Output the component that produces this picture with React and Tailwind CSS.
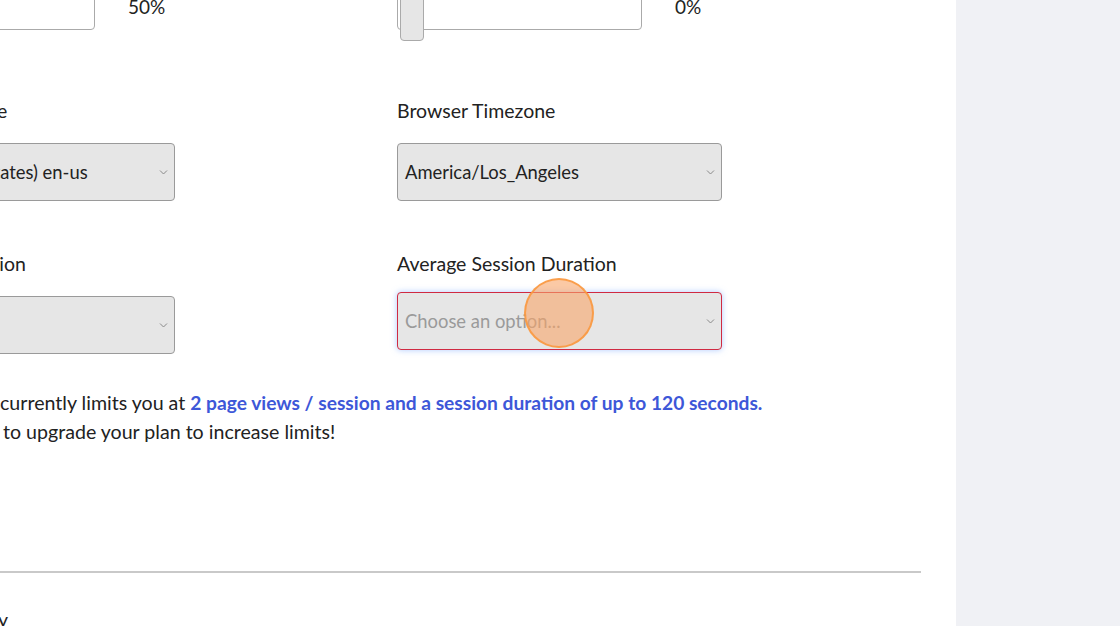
import React from "react";

function Chevron() {
  return (
    <svg width="9" height="6" viewBox="0 0 9 6" className="absolute right-[6px] top-1/2 -translate-y-1/2">
      <path d="M1 1.5 L4.5 5 L8 1.5" fill="none" stroke="#8a8a8a" strokeWidth="1" />
    </svg>
  );
}

function Select({ value, placeholder, focused, className = "" }) {
  return (
    <div
      className={
        "relative w-[325px] h-[58px] rounded-[4px] bg-[#e6e6e6] flex items-center px-[7px] pt-[2px] text-[18.4px] " +
        (focused
          ? "border border-[#d02a42] shadow-[0_0_6px_0_rgba(110,160,255,0.55)] "
          : "border border-[#9a9a9a] ") +
        className
      }
    >
      <span className={placeholder ? "text-[#9a9a9a]" : "text-[#222]"}>{placeholder || value}</span>
      <Chevron />
    </div>
  );
}

export default function App() {
  return (
    <div
      className="flex w-[1120px] h-[626px] overflow-hidden bg-white"
      style={{ fontFamily: "Lato, 'Noto Sans', sans-serif" }}
    >
      <div className="relative w-[956px] h-full overflow-hidden bg-white text-[#222]">
        <div className="ml-[-150px] mt-[-20px]">
          <div className="grid grid-cols-[547px_547px]">
            {/* row 1 */}
            <div className="flex items-center h-[50px]">
              <div className="relative w-[245px] h-[50px] border border-[#aaa] rounded-[4px] bg-white">
                <div className="absolute left-[1px] bottom-[-12px] w-[24px] h-[60px] rounded-[4px] bg-[#e6e6e6] border border-[#aaa]" />
              </div>
              <span className="ml-[33px] text-[19px] mt-[4px]">50%</span>
            </div>
            <div className="flex items-center h-[50px]">
              <div className="relative w-[245px] h-[50px] border border-[#aaa] rounded-[4px] bg-white">
                <div className="absolute left-[2px] bottom-[-12px] w-[24px] h-[60px] rounded-[4px] bg-[#e6e6e6] border border-[#aaa]" />
              </div>
              <span className="ml-[33px] text-[19px] mt-[4px]">0%</span>
            </div>

            {/* row 2 */}
            <div className="mt-[68px]">
              <div className="text-[19.5px] leading-[26px]">Browser Language</div>
              <Select value="English (United States) en-us" className="mt-[19px]" />
            </div>
            <div className="mt-[68px]">
              <div className="text-[19.5px] leading-[26px]">Browser Timezone</div>
              <Select value="America/Los_Angeles" className="mt-[19px]" />
            </div>

            {/* row 3 */}
            <div className="mt-[50px]">
              <div className="text-[19.5px] leading-[26px] pl-[3px]">Pageviews / Session</div>
              <Select value="" className="mt-[19px]" />
            </div>
            <div className="mt-[50px]">
              <div className="text-[19.5px] leading-[26px]">Average Session Duration</div>
              <div className="relative mt-[15px] w-[325px]">
                <Select placeholder="Choose an option..." focused />
                <div className="absolute left-[127px] top-[-14px] w-[70px] h-[70px] rounded-full bg-[rgba(248,165,105,0.6)] border-2 border-[rgba(250,150,60,0.85)]" />
              </div>
            </div>
          </div>
        </div>

        <div className="mt-[34px] text-[19.6px] leading-[29px]">
          <div>
            currently limits you at{" "}
            <span className="font-bold text-[#3d57d8] text-[19.2px]">
              2 page views / session and a session duration of up to 120 seconds.
            </span>
          </div>
          <div className="ml-[3px]">to upgrade your plan to increase limits!</div>
        </div>

        <div className="mt-[125px] w-[921px] h-[2px] bg-[#c9c9c9]" />
        <div className="mt-[34px] text-[19.5px] leading-[26px] ml-[-2px]">y</div>
      </div>
      <div className="flex-1 h-full bg-[#f0f1f5]" />
    </div>
  );
}
